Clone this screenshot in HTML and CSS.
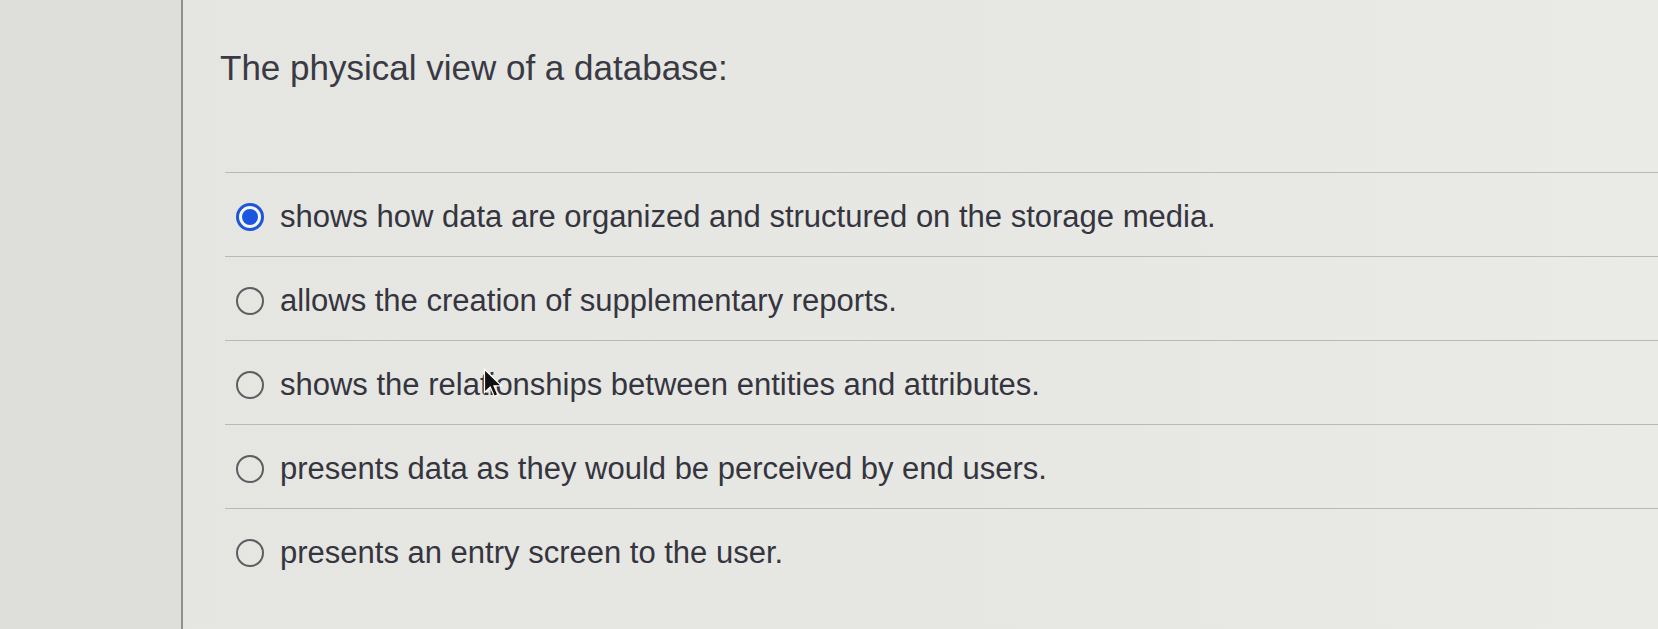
FILE: index.html
```html
<!DOCTYPE html>
<html>
<head>
<meta charset="utf-8">
<link rel="stylesheet" href="styles.css">
</head>
<body>
<div class="page">
  <aside class="side"></aside>
  <main class="main">
    <h1 class="question">The physical view of a database:</h1>
    <ul class="options">
      <li class="option">
        <span class="radio radio-on"><span class="dot"></span></span>
        <span class="label">shows how data are organized and structured on the storage media.</span>
      </li>
      <li class="option">
        <span class="radio"></span>
        <span class="label">allows the creation of supplementary reports.</span>
      </li>
      <li class="option">
        <span class="radio"></span>
        <span class="label">shows the relationships between entities and attributes.</span>
        <svg class="cursor" width="21" height="31" viewBox="0 0 16 24"><path d="M1 1 L1 19 L5.5 14.8 L8.6 22 L11.4 20.8 L8.4 13.8 L14 13.6 Z" fill="#111" stroke="#fff" stroke-width="1"/></svg>
      </li>
      <li class="option">
        <span class="radio"></span>
        <span class="label">presents data as they would be perceived by end users.</span>
      </li>
      <li class="option">
        <span class="radio"></span>
        <span class="label">presents an entry screen to the user.</span>
      </li>
    </ul>
  </main>
</div>
</body>
</html>
```

FILE: styles.css
```css
html, body {
  margin: 0;
  padding: 0;
  height: 100%;
}
body {
  background: #e5e5e1;
  font-family: "Liberation Sans", Arial, sans-serif;
  color: #35353f;
  overflow: hidden;
}
.page {
  display: flex;
  height: 629px;
}
.side {
  width: 181px;
  flex: 0 0 181px;
  background: #dededa;
  border-right: 2px solid #8f8f8e;
}
.main {
  flex: 1;
  padding-left: 37px;
  background: linear-gradient(90deg, #e5e5e1 0%, #e7e7e3 60%, #eaeae7 100%);
}
.question {
  margin: 47px 0 0 0;
  font-size: 35px;
  line-height: 42px;
  font-weight: normal;
  color: #3a3a44;
}
.options {
  list-style: none;
  margin: 83px 0 0 5px;
  padding: 0;
}
.option {
  position: relative;
  display: flex;
  align-items: center;
  gap: 16px;
  height: 84px;
  padding-left: 11px;
  padding-top: 4px;
  box-sizing: border-box;
  border-top: 1.5px solid #b9b9b6;
}
.radio {
  box-sizing: border-box;
  width: 28px;
  height: 28px;
  border-radius: 50%;
  border: 2px solid #5e5e62;
  display: flex;
  align-items: center;
  justify-content: center;
  flex: 0 0 28px;
}
.radio-on {
  border: 3px solid #1d57d8;
  background: #f4f6fc;
}
.dot {
  width: 16px;
  height: 16px;
  border-radius: 50%;
  background: #1a56de;
}
.label {
  font-size: 31px;
  line-height: 36px;
  color: #35353f;
}
.cursor {
  position: absolute;
  left: 258px;
  top: 27px;
}
```
